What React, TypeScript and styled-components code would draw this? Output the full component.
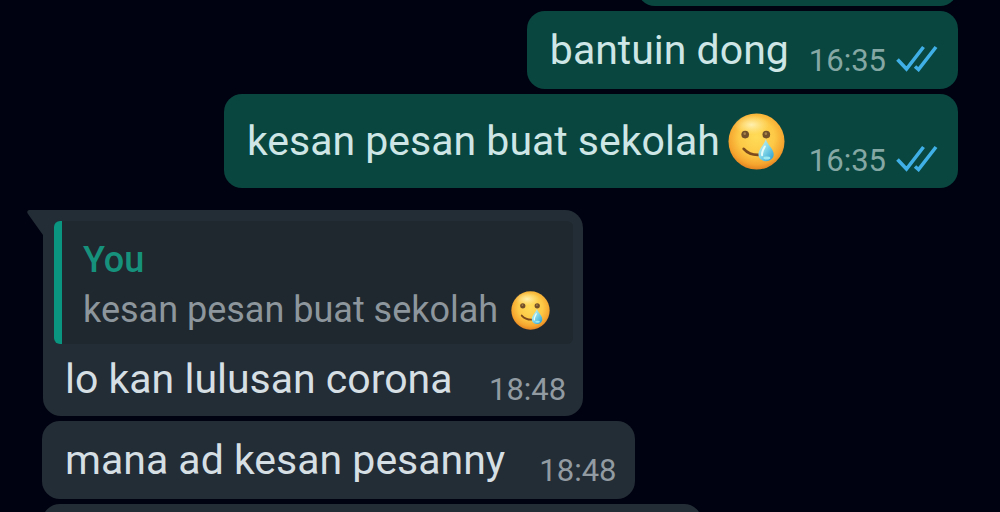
import React, { useId } from "react";
import styled, { createGlobalStyle } from "styled-components";

const GlobalStyle = createGlobalStyle`
  * { box-sizing: border-box; }
  body {
    margin: 0;
    background: #000212;
    font-family: Roboto, "Liberation Sans", sans-serif;
    overflow: hidden;
  }
`;

type Side = "in" | "out";
type Cut = "top" | "bottom";

const Chat = styled.main`
  display: flex;
  flex-direction: column;
  gap: 5px;
  height: 100vh;
  padding: 0 42px;
  overflow: hidden;
`;

const Bubble = styled.article<{ $side: Side }>`
  display: flex;
  flex: none;
  align-items: flex-end;
  align-self: ${(p) => (p.$side === "out" ? "flex-end" : "flex-start")};
  gap: 20px;
  padding: 15px 20px 15px 23px;
  border-radius: 18px;
  background: ${(p) => (p.$side === "out" ? "#09463f" : "#232d35")};
  color: ${(p) => (p.$side === "out" ? "#cfe6e6" : "#d5dfe4")};
`;

const EmojiBubble = styled(Bubble)`
  gap: 24px;
  padding-top: 14px;
  padding-bottom: 14px;
`;

const IncomingBubble = styled(Bubble)`
  gap: 34px;
  padding-right: 19px;
`;

const ReplyBubble = styled(IncomingBubble)`
  position: relative;
  flex-direction: column;
  align-items: stretch;
  gap: 11px;
  margin: 17px 0 0 1px;
  padding: 11px 10px 13px 11px;
  border-top-left-radius: 0;
`;

const Tail = styled.svg`
  position: absolute;
  top: 0;
  right: 100%;
  width: 17px;
  height: 28px;
  margin-right: -1px;
`;

const CutBubble = styled.div<{ $side: Side; $edge: Cut; $width: number }>`
  flex: none;
  align-self: ${(p) => (p.$side === "out" ? "flex-end" : "flex-start")};
  width: ${(p) => p.$width}%;
  height: 42px;
  margin-top: ${(p) => (p.$edge === "top" ? "-36px" : "0")};
  border-radius: 18px;
  background: ${(p) => (p.$side === "out" ? "#09463f" : "#232d35")};
`;

const Body = styled.p`
  display: flex;
  align-items: center;
  gap: 8px;
  margin: 0;
  font-size: 41px;
  line-height: 48px;
  white-space: nowrap;
`;

const EmojiBody = styled(Body)`
  height: 66px;
`;

const Meta = styled.div<{ $side: Side }>`
  display: flex;
  align-items: center;
  gap: 10px;
  margin-bottom: -5px;
  font-size: 31px;
  line-height: 36px;
  color: ${(p) => (p.$side === "out" ? "#86a8a5" : "#929ba2")};
`;

const ReplyRow = styled.div`
  display: flex;
  align-items: flex-end;
  justify-content: space-between;
  gap: 36px;
  padding: 0 7px 0 11px;
`;

const Quote = styled.blockquote`
  display: flex;
  flex-direction: column;
  gap: 8px;
  margin: 0;
  padding: 18px 23px 13px 21px;
  border-left: 8px solid #099580;
  border-radius: 6px;
  background: #1f282e;
`;

const QuoteAuthor = styled.cite`
  color: #16917b;
  font-size: 36px;
  font-style: normal;
  font-weight: 500;
  line-height: 42px;
`;

const QuoteText = styled.p`
  display: flex;
  align-items: center;
  gap: 13px;
  margin: 0;
  color: #8d969c;
  font-size: 36px;
  line-height: 42px;
  white-space: nowrap;
`;

const Face = styled.svg<{ $size: number }>`
  flex: none;
  width: ${(p) => p.$size}px;
  height: ${(p) => p.$size}px;
`;

const Ticks = styled.svg`
  width: 42px;
  height: 27px;
  margin-bottom: 5px;
`;

function TearfulSmile({ size }: { size: number }) {
  const id = useId();
  return (
    <Face $size={size} viewBox="0 0 58 58" role="img" aria-label="smiling face with tear">
      <defs>
        <radialGradient id={`${id}f`} cx="0.5" cy="0.42" r="0.58">
          <stop offset="0" stopColor="#ffdc58" />
          <stop offset="0.55" stopColor="#fdc946" />
          <stop offset="0.85" stopColor="#f5a52e" />
          <stop offset="1" stopColor="#e38322" />
        </radialGradient>
        <radialGradient id={`${id}h`} cx="0.5" cy="0.5" r="0.5">
          <stop offset="0" stopColor="#fff6c4" stopOpacity="0.85" />
          <stop offset="1" stopColor="#ffef9d" stopOpacity="0" />
        </radialGradient>
        <linearGradient id={`${id}t`} x1="0" y1="0" x2="0.9" y2="1">
          <stop offset="0" stopColor="#d8f1e6" />
          <stop offset="0.45" stopColor="#8bdcea" />
          <stop offset="1" stopColor="#2f9fd0" />
        </linearGradient>
      </defs>
      <circle cx="29" cy="29" r="28.5" fill={`url(#${id}f)`} />
      <ellipse cx="24" cy="12" rx="18" ry="10" fill={`url(#${id}h)`} />
      <circle cx="17.5" cy="22" r="3.9" fill="#71502a" />
      <circle cx="39" cy="22" r="3.9" fill="#71502a" />
      <circle cx="17" cy="21" r="1.3" fill="#a88349" />
      <circle cx="38.500" cy="21" r="1.3" fill="#a88349" />
      <path d="M16 36.500c4 4.500 9 6.800 17 6" fill="none" stroke="#7c4a1c" strokeWidth="2.800" strokeLinecap="round" />
      <path d="M38.500 26.500C37 32.500 31 36.500 31 42c0 4.500 3.500 7 7.700 7s7.800-2.500 7.800-7c0-5.500-6.500-9.500-8-15.500z" fill={`url(#${id}t)`} />
      <path d="M37.500 34c-2 3.500-3.500 6-2.800 9" fill="none" stroke="#e4fbf8" strokeWidth="2" strokeLinecap="round" />
      <ellipse cx="39.500" cy="45.800" rx="3.500" ry="1.500" fill="#9de9f2" />
    </Face>
  );
}

function ReadTicks() {
  return (
    <Ticks viewBox="0 0 42 27" role="img" aria-label="Read">
      <path
        d="M1.500 14.500L10.500 24 27.500 2M19 21.500L22.500 24.500 40 2"
        fill="none"
        stroke="#3fafe6"
        strokeWidth="3.600"
      />
    </Ticks>
  );
}

function Stamp({ time, side }: { time: string; side: Side }) {
  return (
    <Meta $side={side}>
      <time>{time}</time>
      {side === "out" && <ReadTicks />}
    </Meta>
  );
}

export default function App() {
  return (
    <>
      <GlobalStyle />
      <Chat>
        <CutBubble $side="out" $edge="top" $width={35} />
        <Bubble $side="out">
          <Body>bantuin dong</Body>
          <Stamp time="16:35" side="out" />
        </Bubble>
        <EmojiBubble $side="out">
          <EmojiBody>
            kesan pesan buat sekolah
            <TearfulSmile size={57} />
          </EmojiBody>
          <Stamp time="16:35" side="out" />
        </EmojiBubble>
        <ReplyBubble $side="in">
          <Tail viewBox="0 0 17 28" aria-hidden="true">
            <path d="M17 0H2Q-1 1 1 4L16 25V28H17Z" fill="#232d35" />
          </Tail>
          <Quote>
            <QuoteAuthor>You</QuoteAuthor>
            <QuoteText>
              kesan pesan buat sekolah
              <TearfulSmile size={39} />
            </QuoteText>
          </Quote>
          <ReplyRow>
            <Body>lo kan lulusan corona</Body>
            <Stamp time="18:48" side="in" />
          </ReplyRow>
        </ReplyBubble>
        <IncomingBubble $side="in">
          <Body>mana ad kesan pesanny</Body>
          <Stamp time="18:48" side="in" />
        </IncomingBubble>
        <CutBubble $side="in" $edge="bottom" $width={72} />
      </Chat>
    </>
  );
}
